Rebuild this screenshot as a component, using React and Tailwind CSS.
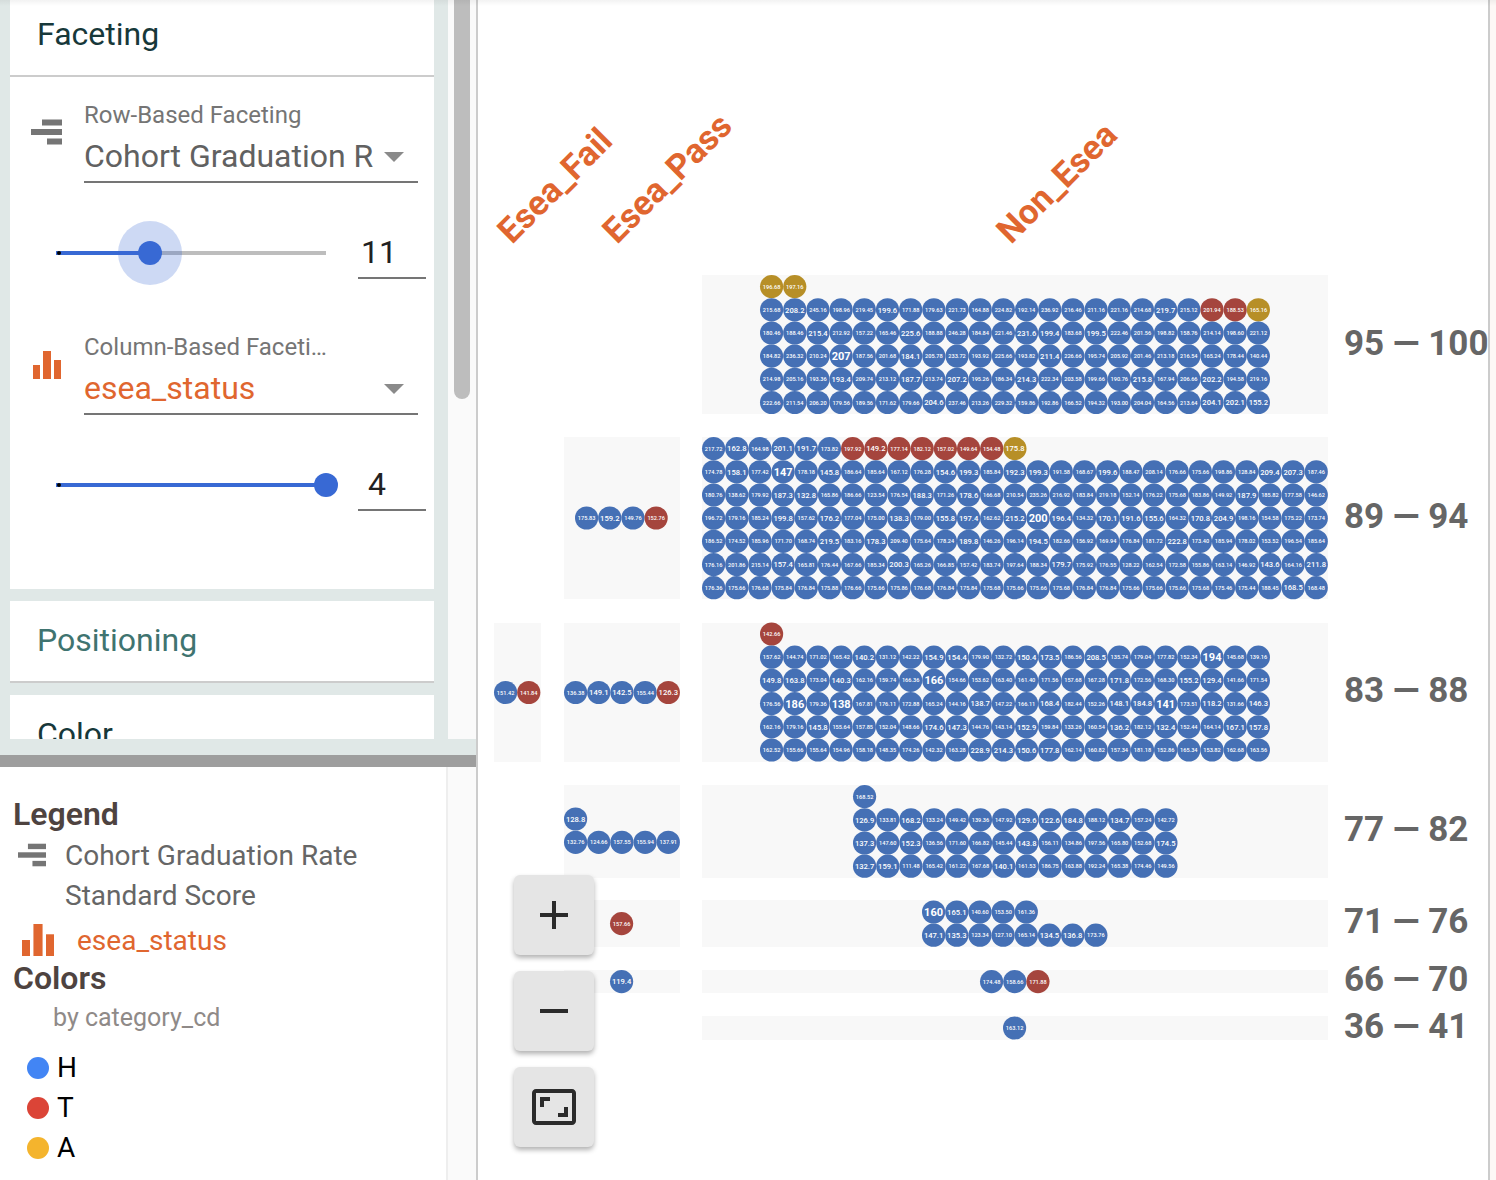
import React from 'react';

const CELL = 23.18;

const BLUE = '#4570b5';
const RED = '#a5453d';
const GOLD = '#b78f27';

// r / g prefix marks the red and gold dots, anything else is blue
const panels = [
  { x: 702, y: 275, w: 626, h: 139 },
  { x: 564, y: 437, w: 116, h: 162 },
  { x: 702, y: 437, w: 626, h: 162 },
  { x: 494, y: 623, w: 47, h: 139 },
  { x: 564, y: 623, w: 116, h: 139 },
  { x: 702, y: 623, w: 626, h: 139 },
  { x: 564, y: 785, w: 116, h: 93 },
  { x: 702, y: 785, w: 626, h: 93 },
  { x: 564, y: 900, w: 116, h: 47 },
  { x: 702, y: 900, w: 626, h: 47 },
  { x: 564, y: 970, w: 116, h: 23 },
  { x: 702, y: 970, w: 626, h: 23 },
  { x: 702, y: 1016, w: 626, h: 24 },
];

const dotRows = [
  // 95 - 100, non esea
  [760, 286.6, 'g196.68 g197.16'],
  [760, 309.8, '215.68 208.2 245.16 198.96 219.45 199.6 171.88 179.63 221.73 164.88 224.82 192.14 236.92 216.46 211.16 221.16 214.68 219.7 215.12 r201.94 r188.53 g165.16'],
  [760, 333, '180.46 188.46 215.4 212.92 157.22 165.46 225.6 188.88 246.28 184.84 221.46 231.6 199.4 183.68 199.5 222.46 201.56 198.82 158.76 214.14 198.60 221.12'],
  [760, 356.1, '184.82 236.32 210.24 207 187.56 201.68 184.1 205.78 233.72 193.92 225.66 193.82 211.4 226.66 195.74 205.92 201.46 213.18 216.54 165.24 178.44 140.44'],
  [760, 379.3, '214.98 205.16 193.36 193.4 209.74 213.12 187.7 213.74 207.2 195.26 186.34 214.3 222.34 203.58 199.66 190.76 215.8 167.94 206.66 202.2 194.58 219.16'],
  [760, 402.5, '222.66 211.54 206.20 179.56 189.56 171.62 179.66 204.6 237.46 213.26 229.32 159.86 192.86 166.52 194.32 193.00 204.04 164.56 213.64 204.1 202.1 155.2'],
  // 89 - 94, esea pass
  [575, 518, '175.83 159.2 149.76 r152.76'],
  // 89 - 94, non esea
  [702, 448.6, '217.72 162.8 164.98 201.1 191.7 173.82 r197.92 r149.2 r177.14 r182.12 r157.02 r149.64 r154.48 g175.8'],
  [702, 471.8, '174.78 158.1 177.42 147 178.18 145.8 186.64 185.64 167.12 176.28 154.6 199.3 185.84 192.3 199.3 191.58 168.67 199.6 188.47 208.14 176.66 175.66 198.86 128.84 209.4 207.3 187.46'],
  [702, 495, '180.76 138.62 179.92 187.3 132.8 165.86 186.66 123.54 176.54 188.3 171.26 178.6 166.68 210.54 235.26 216.92 183.84 219.18 152.14 176.22 175.68 183.86 149.92 187.9 185.82 177.58 146.62'],
  [702, 518.2, '196.72 179.16 185.24 199.8 157.62 176.2 177.04 175.00 138.3 179.00 155.8 197.4 162.62 215.2 200 196.4 134.32 170.1 191.6 155.6 164.32 170.8 204.9 198.16 154.58 175.22 173.74'],
  [702, 541.3, '186.52 174.52 185.96 171.70 168.74 219.5 183.16 178.3 209.40 175.64 178.24 189.8 146.26 196.14 194.5 182.66 156.92 169.94 176.84 181.72 222.8 173.40 185.94 178.02 153.52 196.54 185.64'],
  [702, 564.5, '176.16 201.86 215.14 157.4 165.81 176.44 167.66 185.34 200.3 165.26 166.85 157.42 183.74 197.64 188.34 179.7 175.92 176.55 128.22 162.54 172.58 155.86 163.14 146.92 143.6 164.16 211.8'],
  [702, 587.7, '176.36 175.66 176.68 175.84 176.84 175.88 176.66 175.66 175.86 176.68 176.84 175.84 175.68 175.66 175.66 175.68 176.84 176.84 175.66 175.66 175.66 175.68 175.46 175.44 188.45 168.5 168.48'],
  // 83 - 88
  [494, 692.5, '151.42 r141.84'],
  [564, 692.5, '136.38 149.1 142.5 155.44 r126.3'],
  [760, 634, 'r142.66'],
  [760, 657.2, '157.62 144.74 171.02 165.42 140.2 131.12 142.22 154.9 154.4 179.90 132.72 150.4 173.5 186.56 208.5 135.74 179.04 177.82 152.34 194 145.68 139.16'],
  [760, 680.4, '149.8 163.8 173.04 140.3 162.16 159.74 166.36 166 154.66 153.62 163.40 161.40 171.56 157.68 167.28 171.8 172.56 168.30 155.2 129.4 141.66 171.54'],
  [760, 703.6, '176.56 186 179.36 138 167.81 176.11 172.88 165.24 144.16 138.7 147.22 166.11 168.4 182.44 152.26 148.1 184.8 141 173.51 118.2 131.66 146.3'],
  [760, 726.8, '162.16 179.16 145.8 155.64 157.85 152.04 148.66 174.6 147.3 144.76 143.14 152.9 159.84 133.26 160.54 136.2 182.12 132.4 152.44 164.14 167.1 157.8'],
  [760, 750, '162.52 155.66 155.64 154.96 158.18 148.35 174.26 142.32 163.28 228.9 214.3 150.6 177.8 162.14 160.82 157.34 181.18 152.86 165.34 153.82 162.68 163.56'],
  // 77 - 82
  [564, 819, '128.8'],
  [564, 842.3, '132.76 124.66 157.55 155.94 137.91'],
  [853, 796.6, '168.52'],
  [853, 819.8, '126.9 133.81 168.2 133.24 149.42 139.36 147.92 129.6 122.6 184.8 188.12 134.7 157.24 142.72'],
  [853, 843, '137.3 147.60 152.3 136.56 171.60 166.82 145.44 143.8 156.11 134.86 197.56 165.80 152.68 174.5'],
  [853, 866.2, '132.7 159.1 111.48 165.42 161.22 167.68 140.1 161.53 186.75 163.88 192.24 165.38 174.46 149.56'],
  // 71 - 76
  [610, 923.6, 'r157.66'],
  [922, 912, '160 165.1 140.60 153.50 161.36'],
  [922, 935.2, '147.1 135.3 123.34 127.10 165.14 134.5 136.8 173.76'],
  // 66 - 70
  [610, 981.6, '119.4'],
  [980, 981.6, '174.48 158.66 r171.88'],
  // 36 - 41
  [1003, 1028, '163.12'],
];

const rowLabels = [
  ['95 — 100', 342],
  ['89 — 94', 515.5],
  ['83 — 88', 689.5],
  ['77 — 82', 828.5],
  ['71 — 76', 920.5],
  ['66 — 70', 978.5],
  ['36 — 41', 1025.5],
];

const columnLabels = [
  ['Esea_Fail', 512],
  ['Esea_Pass', 617],
  ['Non_Esea', 1011],
];

const Dot = ({ cx, cy, raw }) => {
  const flag = raw[0];
  const label = flag === 'r' || flag === 'g' ? raw.slice(1) : raw;
  const fill = flag === 'r' ? RED : flag === 'g' ? GOLD : BLUE;
  // labels are scaled to fit inside the dot
  const size = label.length <= 3 ? 11 : label.length === 5 ? 7.6 : 5.6;
  return (
    <g>
      <circle cx={cx} cy={cy} r="11.6" fill={fill} />
      <text
        x={cx}
        y={cy + size * 0.36}
        textAnchor="middle"
        fontSize={size}
        fontWeight={label.length <= 3 ? 700 : 500}
        fill="#fff"
      >
        {label}
      </text>
    </g>
  );
};

const Chart = () => (
  <svg viewBox="478 0 1010 1180" width="1010" height="1180" className="block">
    {panels.map((p, i) => (
      <rect key={i} x={p.x} y={p.y} width={p.w} height={p.h} fill="#f8f8f8" />
    ))}
    {dotRows.map(([x, y, items], i) =>
      items.split(' ').map((raw, j) => (
        <Dot key={`${i}-${j}`} cx={x + CELL / 2 + j * CELL} cy={y} raw={raw} />
      ))
    )}
    {columnLabels.map(([label, x]) => (
      <text
        key={label}
        x={x}
        y="245"
        transform={`rotate(-45 ${x} 245)`}
        fontSize="34.5"
        fontWeight="700"
        fill="#e0662f"
      >
        {label}
      </text>
    ))}
    {rowLabels.map(([label, y]) => (
      <text key={label} x="1344" y={y + 12.5} fontSize="35" fontWeight="700" fill="#666666">
        {label}
      </text>
    ))}
  </svg>
);

const RowIcon = ({ className }) => (
  <svg viewBox="0 0 31 26" className={className} fill="#757575">
    <rect x="11" y="0.5" width="20" height="6" />
    <rect x="0" y="10" width="31" height="6" />
    <rect x="16" y="19.5" width="15" height="6" />
  </svg>
);

const ColumnIcon = ({ className }) => (
  <svg viewBox="0 0 28 28" className={className} fill="#e0662f">
    <rect x="0" y="14" width="7" height="14" />
    <rect x="10" y="0" width="8" height="28" />
    <rect x="21" y="9" width="7" height="19" />
  </svg>
);

const FacetControl = ({ icon, label, value, valueClass, percent, number, active }) => (
  <div className="h-[232px]">
    <div className="flex h-[87px]">
      <div className="w-[74px] pl-[21px] pt-[23px]">{icon}</div>
      <div className="w-[334px] border-b-2 border-[#757575]">
        <div className="h-[38px] max-w-[243px] truncate text-[24px] leading-[38px] text-[#757575]">
          {label}
        </div>
        <div className="flex h-[47px] items-center pb-[4px]">
          <div className={`h-[44px] w-[290px] overflow-hidden whitespace-nowrap text-[32px] leading-[44px] ${valueClass}`}>
            {value}
          </div>
          <svg viewBox="0 0 20 10" className="ml-[10px] mt-[3px] h-[10px] w-[20px]" fill="#8a8a8a">
            <polygon points="0,0 20,0 10,10" />
          </svg>
        </div>
      </div>
    </div>
    <div className="mt-[30px] flex pl-[46px]">
      <div className="relative flex h-[80px] w-[270px] items-center">
        <div className="h-[4px] w-full bg-[#bdbdbd]">
          <div className="h-full bg-[#3869d4]" style={{ width: `${percent}%` }} />
        </div>
        <div className="absolute left-[1px] top-[38px] h-[4px] w-[4px] rounded-full bg-black" />
        {active && (
          <div
            className="absolute top-[8px] -ml-[32px] h-[64px] w-[64px] rounded-full bg-[#3869d4]/25"
            style={{ left: `${percent}%` }}
          />
        )}
        <div
          className="absolute top-[28px] -ml-[12px] h-[24px] w-[24px] rounded-full bg-[#3869d4]"
          style={{ left: `${percent}%` }}
        />
      </div>
      <div className="ml-[32px] h-[66px] w-[68px] border-b-2 border-[#757575] pl-[3px] pt-[17px]">
        <div className="w-[32px] text-center text-[32px] leading-[44px] text-[#212121]">{number}</div>
      </div>
    </div>
  </div>
);

const CardHeader = ({ title, className }) => (
  <div className={`flex h-[82px] items-center border-b-2 border-[#cccccc] pb-[2px] pl-[27px] text-[32px] ${className}`}>
    {title}
  </div>
);

const ToolButton = ({ d }) => (
  <button className="flex h-[80px] w-[80px] items-center justify-center rounded-[6px] bg-[#e5e5e5] shadow-[0_3px_5px_rgba(0,0,0,0.3)]">
    <svg viewBox="0 0 24 24" className="h-[48px] w-[48px]" fill="#2b2b2b">
      <path d={d} />
    </svg>
  </button>
);

const LegendDot = ({ color, label }) => (
  <div className="flex h-[40px] items-center pl-[27px]">
    <span className={`h-[22px] w-[22px] rounded-full ${color}`} />
    <span className="ml-[8px] text-[28px] leading-[40px] text-black">{label}</span>
  </div>
);

const Sidebar = () => (
  <div className="flex w-[476px] shrink-0 flex-col">
    <div className="flex h-[739px] bg-[#e0e8e7]">
      <div className="h-full w-[448px] overflow-hidden pl-[10px] pr-[14px]">
        <div className="-mt-[5px] bg-white">
          <CardHeader title="Faceting" className="text-[#17383a]" />
          <div className="h-[512px] pt-[19px]">
            <FacetControl
              icon={<RowIcon className="h-[26px] w-[31px]" />}
              label="Row-Based Faceting"
              value="Cohort Graduation R"
              valueClass="text-[#616161]"
              percent={34.8}
              number="11"
              active
            />
            <FacetControl
              icon={<ColumnIcon className="ml-[2px] h-[28px] w-[28px]" />}
              label="Column-Based Faceting"
              value="esea_status"
              valueClass="text-[#e0662f]"
              percent={100}
              number="4"
            />
          </div>
        </div>
        <div className="mt-[12px] bg-white">
          <CardHeader title="Positioning" className="text-[#3f7470]" />
        </div>
        <div className="mt-[12px] bg-white">
          <CardHeader title="Color" className="text-[#17383a]" />
        </div>
      </div>
      <div className="h-full w-[28px] bg-[#fafafa] pl-[6px]">
        <div className="h-[399px] w-[16px] rounded-b-[8px] bg-[#bdbdbd]" />
      </div>
    </div>
    <div className="h-[16px] bg-[#e0e8e7]" />
    <div className="h-[12px] bg-[#9e9e9e]" />
    <div className="flex h-[413px]">
      <div className="w-[448px] border-r-2 border-[#eeeeee] bg-white pl-[13px] pt-[27px] text-[28px] leading-[40px]">
        <div className="h-[42px] text-[32px] font-semibold text-[#4e4340]">Legend</div>
        <div className="flex">
          <RowIcon className="ml-[5px] mt-[7px] h-[24px] w-[28px]" />
          <div className="ml-[19px] text-[#666666]">
            Cohort Graduation Rate
            <br />
            Standard Score
          </div>
        </div>
        <div className="mt-[5px] flex h-[37px]">
          <ColumnIcon className="ml-[9px] mt-[3px] h-[32px] w-[32px]" />
          <span className="ml-[23px] text-[#e0662f]">esea_status</span>
        </div>
        <div className="h-[40px] text-[32px] font-semibold text-[#4e4340]">Colors</div>
        <div className="pl-[40px] text-[25px] text-[#8f8a88]">by category_cd</div>
        <div className="-ml-[13px] mt-[10px]">
          <LegendDot color="bg-[#4285f4]" label="H" />
          <LegendDot color="bg-[#db4437]" label="T" />
          <LegendDot color="bg-[#f4b42d]" label="A" />
        </div>
      </div>
      <div className="w-[28px] bg-[#fafafa]" />
    </div>
  </div>
);

const App = () => (
  <div className="relative flex h-[1180px] w-[1496px] overflow-hidden bg-white font-['Roboto',sans-serif]">
    <Sidebar />
    <div className="relative h-full w-[1014px] shrink-0 border-l-2 border-r-2 border-[#cccccc]">
      <Chart />
      <div className="absolute left-[36px] top-[875px] flex flex-col gap-[16px]">
        <ToolButton d="M19 13h-6v6h-2v-6H5v-2h6V5h2v6h6v2z" />
        <ToolButton d="M19 13H5v-2h14v2z" />
        <ToolButton d="M19 12h-2v3h-3v2h5v-5zM7 9h3V7H5v5h2V9zm14-6H3c-1.1 0-2 .9-2 2v14c0 1.1.9 2 2 2h18c1.1 0 2-.9 2-2V5c0-1.1-.9-2-2-2zm0 16.01H3V4.99h18v14.02z" />
      </div>
    </div>
    <div className="flex-1 bg-[#fdf8f6]" />
    <div className="pointer-events-none absolute inset-x-0 top-0 h-[6px] bg-gradient-to-b from-black/5 to-transparent" />
  </div>
);

export default App;
